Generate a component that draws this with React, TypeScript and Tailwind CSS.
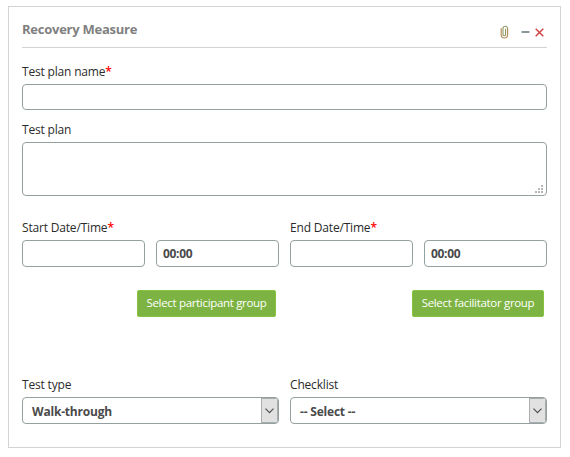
import type { ReactNode } from "react";

const field =
  "block w-full rounded-[4px] border border-[#95a1a1] bg-white outline-none text-[12px] font-bold text-[#4a4a4a]";

function Label({ children, required }: { children: ReactNode; required?: boolean }) {
  return (
    <label className="block h-4 whitespace-nowrap text-[12px] leading-[17px] tracking-[-0.18px] text-[#2b2b2b]">
      {children}
      {required && <span className="font-semibold text-[#ff0000]">*</span>}
    </label>
  );
}

function DateTime({ label }: { label: string }) {
  return (
    <div>
      <Label required>{label}</Label>
      <div className="mt-[5px] grid grid-cols-2 gap-[11px]">
        <input className={`${field} h-[27px] px-1.5`} />
        <input className={`${field} h-[27px] px-1.5 tracking-[-0.3px]`} defaultValue="00:00" />
      </div>
    </div>
  );
}

function Select({ label, value }: { label: string; value: string }) {
  return (
    <div>
      <Label>{label}</Label>
      <div className={`${field} mt-[5px] flex h-[27px] overflow-hidden`}>
        <span className="flex-1 pl-[9px] pt-px leading-[26px] tracking-[-0.2px]">{value}</span>
        <span className="flex w-[17px] items-center justify-center border border-[#a9adad] bg-[#e1e1e1]">
          <svg width="9" height="6" viewBox="0 0 9 6" fill="none" stroke="#505050" strokeWidth="1.2">
            <path d="M0.5 0.7 4.5 4.7 8.5 0.7" />
          </svg>
        </span>
      </div>
    </div>
  );
}

function GroupButton({ children, width }: { children: ReactNode; width: string }) {
  return (
    <button
      className={`${width} h-[27px] whitespace-nowrap rounded-[2px] border border-[#86c440] bg-[#7cb342] pb-[2px] text-[11.5px] leading-[23px] tracking-[-0.32px] text-white`}
    >
      {children}
    </button>
  );
}

export default function App() {
  return (
    <div className="h-[457px] w-[570px] bg-white pl-2 pt-1.5 font-['Open_Sans',sans-serif] text-[#333333]">
      <section className="h-[442px] w-[553px] border border-[#d3d3d3] px-[13px]">
        <header className="flex h-[41px] items-center border-b border-[#d3d3d3] pt-[6px]">
          <h1 className="flex-1 pb-[2px] text-[13px] font-bold leading-4 tracking-[-0.25px] text-[#808080]">Recovery Measure</h1>
          <div className="flex items-center pr-[3px] pt-1">
            <svg width="9" height="14" viewBox="0 0 9 14" fill="none" strokeLinecap="round">
              <path d="M1.2 3.7v6.1a3.2 3.2 0 0 0 6.4 0V3.5" stroke="#b58f5c" strokeWidth="1.2" />
              <path d="M7.6 3.5a2.3 2.3 0 0 0-4.6 0v6a1.3 1.3 0 0 0 2.6 0V4.1" stroke="#8f9c66" strokeWidth="1.1" />
            </svg>
            <svg className="ml-[12px]" width="9" height="10" viewBox="0 0 9 10">
              <path d="M0.5 5h8" stroke="#8c969a" strokeWidth="2" />
            </svg>
            <svg className="ml-[5px]" width="9" height="9" viewBox="0 0 9 9">
              <path d="M0.7 0.7 8.3 8.3M8.3 0.7 0.7 8.3" stroke="#cf4444" strokeWidth="1.5" />
            </svg>
          </div>
        </header>

        <div className="pt-[15px]">
          <Label required>Test plan name</Label>
          <input className={`${field} mt-[5px] h-[26px] px-1.5`} />
        </div>

        <div className="pt-[11px]">
          <Label>Test plan</Label>
          <div className={`${field} mt-[5px] flex h-[54px] items-end justify-end pb-[2px] pr-[3px]`}>
            <svg width="8" height="8" viewBox="0 0 8 8" fill="#b8b8b8">
              <path d="M6 0h2v2H6zM3 3h2v2H3zM6 3h2v2H6zM0 6h2v2H0zM3 6h2v2H3zM6 6h2v2H6z" />
            </svg>
          </div>
        </div>

        <div className="grid grid-cols-2 gap-x-[11px] pt-[23px]">
          <DateTime label="Start Date/Time" />
          <DateTime label="End Date/Time" />
        </div>

        <div className="grid grid-cols-2 gap-x-[11px] pt-[23px]">
          <div className="flex justify-end pr-[3px]">
            <GroupButton width="w-[139px]">Select participant group</GroupButton>
          </div>
          <div className="flex justify-end pr-[3px]">
            <GroupButton width="w-[132px]">Select facilitator group</GroupButton>
          </div>
        </div>

        <div className="grid grid-cols-2 gap-x-[11px] pt-[59px]">
          <Select label="Test type" value="Walk-through" />
          <Select label="Checklist" value="-- Select --" />
        </div>
      </section>
    </div>
  );
}
